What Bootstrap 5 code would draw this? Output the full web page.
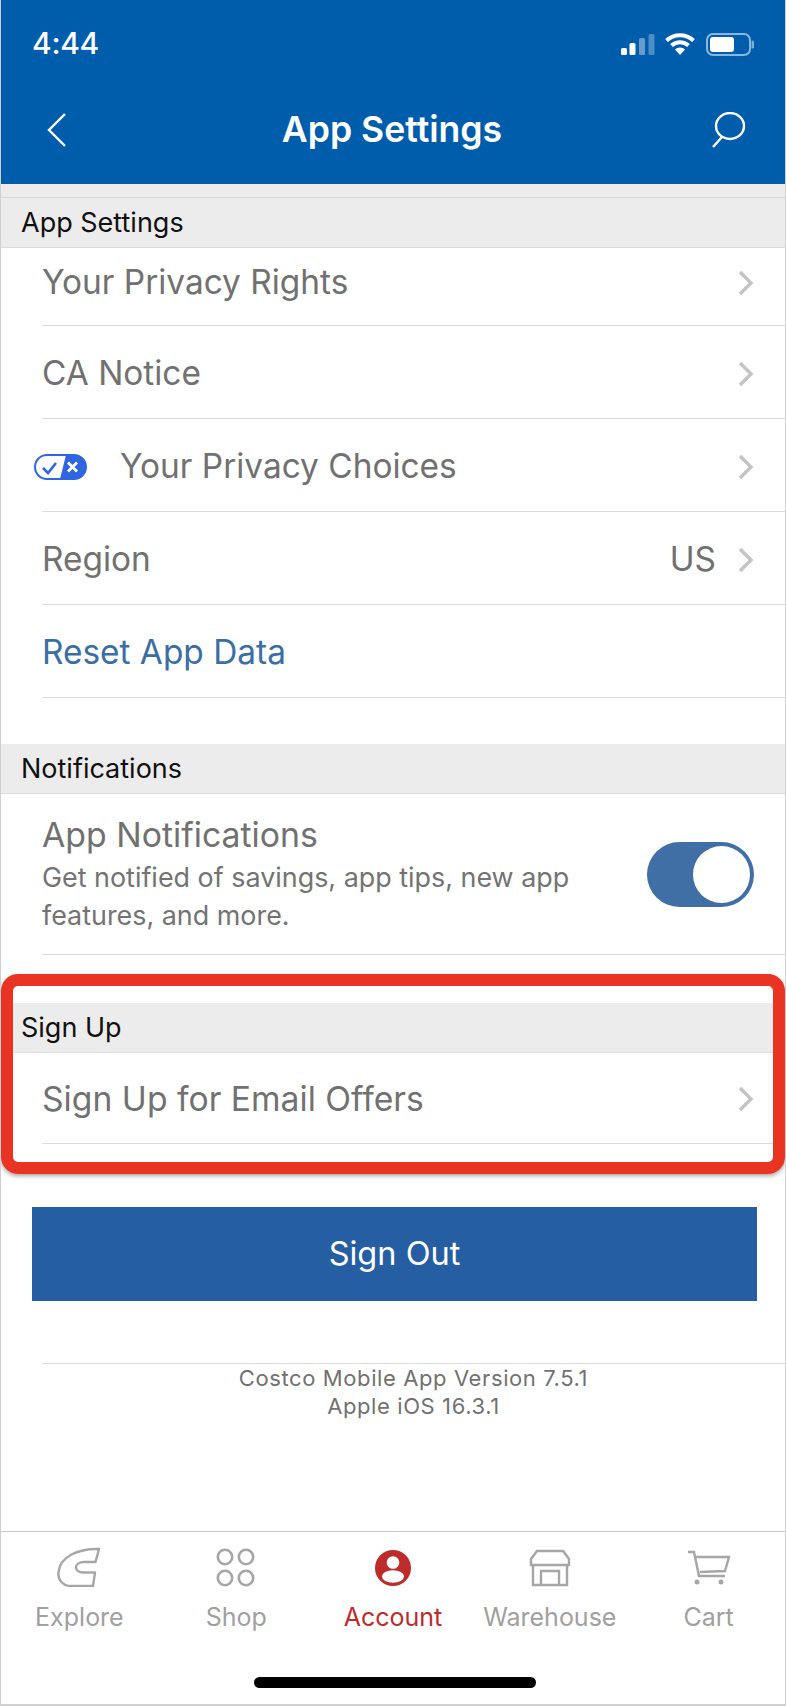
<!DOCTYPE html>
<html lang="en">
<head>
<meta charset="UTF-8" />
<meta name="viewport" content="width=device-width, initial-scale=1.0" />
<link href="https://cdn.jsdelivr.net/npm/bootstrap@5.3.3/dist/css/bootstrap.min.css" rel="stylesheet" />
<title>App Settings</title>
<style>
  html, body { margin: 0; background: #fff; }
  body { font-family: Inter, "Liberation Sans", sans-serif; }
  .phone { width: 786px; height: 1706px; position: relative; overflow: hidden; border: 1px solid #d0d0d0; border-top: 0; }
  .top-blue { height: 184px; background: #005dab; color: #fff; }
  .status-row { height: 86px; padding: 24px 30px 0 31px; }
  .status-time { font-size: 30px; font-weight: 500; line-height: 38px; letter-spacing: -.3px; }
  .status-icons { margin-top: 6px; }
  .title-row { height: 98px; padding: 0 39px 10px 44px; }
  .title-text { font-size: 35.6px; font-weight: 600; margin-left: 7px; }
  .gray-strip { height: 14px; background: #ececec; border-bottom: 1px solid #d8d8d8; }
  .sect-bar { background: #ececec; color: #111; font-size: 27px; line-height: 50px; height: 50px; padding-left: 20px; border-bottom: 1px solid #dcdcdc; }
  .set-row { margin-left: 41px; border-bottom: 1px solid #dcdcdc; height: 93px; padding: 3px 31px 0 0; color: #717171; font-size: 33.4px; }
  .set-row.first-row { height: 78px; padding: 0 31px 8px 0; }
  .set-row.signup-row { height: 91px; padding-top: 2px; font-size: 33.7px; }
  .us-text { margin-right: 22px; }
  .reset-link { color: #3a6ea5; }
  .row-gap { height: 46px; }
  .row-gap-b { height: 48px; }
  .btn-gap { height: 63px; }
  .note-row { margin-left: 41px; height: 161px; border-bottom: 1px solid #dcdcdc; padding-right: 31px; color: #717171; }
  .note-title { font-size: 33.8px; line-height: 42px; margin-bottom: 2px; }
  .note-sub { font-size: 26.9px; line-height: 38px; color: #737373; }
  .switch-pill { width: 107px; height: 65px; border-radius: 33px; background: #3f6fa5; padding: 4px; flex: none; }
  .switch-knob { width: 57px; height: 57px; border-radius: 50%; background: #fff; }
  .privacy-icon { margin-left: -8px; margin-right: 33px; }
  .signout-btn { display: block; margin: 0 29px 0 31px; width: 725px; height: 94px; border-radius: 0; border: 0; background: #265ea3; color: #fff; font-size: 32.5px; }
  .version-block { margin: 62px 0 0 41px; border-top: 1px solid #dcdcdc; color: #717171; font-size: 22px; letter-spacing: .6px; line-height: 28px; text-align: center; }
  .tab-bar { position: absolute; left: 0; right: 0; bottom: 0; height: 174px; border-top: 1px solid #c9c9c9; border-bottom: 1px solid #d0d0d0; background: #fff; padding-top: 15px; }
  .tab-item { width: 157.2px; color: #a0a0a0; font-size: 25px; line-height: 34px; }
  .tab-item.tab-last { padding-left: 4px; }
  .tab-icon { display: block; height: 40px; margin-bottom: 13px; }
  .tab-active { color: #bd2b2b; }
  .home-bar { position: absolute; left: 253px; bottom: 16px; width: 282px; height: 11px; border-radius: 6px; background: #000; }
  .red-frame { position: absolute; left: 0; top: 974px; width: 784px; height: 200px; border: 12px solid #e93323; border-radius: 17px; box-shadow: 0 2px 4px rgba(0,0,0,.35); }
</style>
</head>
<body>
<div class="phone">
  <div class="top-blue">
    <div class="status-row d-flex justify-content-between align-items-start">
      <span class="status-time">4:44</span>
      <svg class="status-icons" width="138" height="30" viewBox="0 0 138 30">
        <g fill="#fff"><rect x="4" y="18" width="6" height="7" rx="1.5"/><rect x="12.500" y="13" width="6" height="12" rx="1.5"/></g>
        <rect x="22" y="8" width="6" height="17" rx="1.5" fill="#fff" opacity=".4"/>
        <rect x="31.500" y="4" width="6" height="21" rx="1.5" fill="#fff" opacity=".3"/>
        <path d="M49.500 10.500a20 20 0 0 1 27 0M54.500 15.500a12.500 12.500 0 0 1 17 0" fill="none" stroke="#fff" stroke-width="4"/>
        <path d="M58 19.500a7 7 0 0 1 10 0L63 25Z" fill="#fff"/>
        <rect x="90" y="4" width="43" height="21" rx="6" fill="none" stroke="#fff" stroke-opacity=".55" stroke-width="2"/>
        <rect x="93" y="7" width="24" height="15" rx="3" fill="#fff"/>
        <rect x="134.500" y="10.500" width="2.500" height="8" rx="1.2" fill="#fff" opacity=".5"/>
      </svg>
    </div>
    <div class="title-row d-flex justify-content-between align-items-center">
      <svg width="22" height="36" viewBox="0 0 22 36"><path d="M20 2 4 18l16 16" fill="none" stroke="#fff" stroke-width="2.4"/></svg>
      <span class="title-text">App Settings</span>
      <svg width="36" height="36" viewBox="0 0 36 36"><ellipse cx="20" cy="14" rx="14" ry="13" fill="none" stroke="#fff" stroke-width="2.4"/><path d="M12 25 3 35" stroke="#fff" stroke-width="2.4"/></svg>
    </div>
  </div>
  <div class="gray-strip"></div>
  <div class="sect-bar">App Settings</div>
  <div class="set-row first-row d-flex align-items-center justify-content-between"><span>Your Privacy Rights</span><svg width="16" height="26" viewBox="0 0 16 26"><path d="M2 2l11 11L2 24" fill="none" stroke="#c4c4c4" stroke-width="3.4"/></svg></div>
  <div class="set-row d-flex align-items-center justify-content-between"><span>CA Notice</span><svg width="16" height="26" viewBox="0 0 16 26"><path d="M2 2l11 11L2 24" fill="none" stroke="#c4c4c4" stroke-width="3.4"/></svg></div>
  <div class="set-row d-flex align-items-center">
    <svg class="privacy-icon" width="53" height="26" viewBox="0 0 53 26"><rect x="1" y="1" width="51" height="24" rx="12" fill="#fff" stroke="#2f66e0" stroke-width="2"/><path d="M32 1h8a12 12 0 0 1 0 24H26Z" fill="#2f66e0"/><path d="M9 14l5 5 8-10" fill="none" stroke="#2f66e0" stroke-width="2.6"/><path d="M34 8.500l9 9m0-9l-9 9" stroke="#fff" stroke-width="2.800"/></svg>
    <span class="flex-grow-1">Your Privacy Choices</span><svg width="16" height="26" viewBox="0 0 16 26"><path d="M2 2l11 11L2 24" fill="none" stroke="#c4c4c4" stroke-width="3.4"/></svg></div>
  <div class="set-row d-flex align-items-center"><span class="flex-grow-1">Region</span><span class="us-text">US</span><svg width="16" height="26" viewBox="0 0 16 26"><path d="M2 2l11 11L2 24" fill="none" stroke="#c4c4c4" stroke-width="3.4"/></svg></div>
  <div class="set-row d-flex align-items-center reset-link">Reset App Data</div>
  <div class="row-gap"></div>
  <div class="sect-bar">Notifications</div>
  <div class="note-row d-flex align-items-center justify-content-between">
    <div><div class="note-title">App Notifications</div><div class="note-sub">Get notified of savings, app tips, new app<br>features, and more.</div></div>
    <div class="switch-pill d-flex justify-content-end"><div class="switch-knob"></div></div>
  </div>
  <div class="row-gap-b"></div>
  <div class="sect-bar">Sign Up</div>
  <div class="set-row signup-row d-flex align-items-center justify-content-between"><span>Sign Up for Email Offers</span><svg width="16" height="26" viewBox="0 0 16 26"><path d="M2 2l11 11L2 24" fill="none" stroke="#c4c4c4" stroke-width="3.4"/></svg></div>
  <div class="btn-gap"></div>
  <button class="btn signout-btn" type="button">Sign Out</button>
  <div class="version-block">Costco Mobile App Version 7.5.1<br>Apple iOS 16.3.1</div>
  <div class="red-frame"></div>
  <div class="tab-bar d-flex justify-content-center">
    <div class="tab-item d-flex flex-column align-items-center">
      <svg class="tab-icon" width="44" height="40" viewBox="0 0 44 40"><path d="M42 2 38.500 15H27C22 15 19 17.500 19 20.500S22 25.500 26 25.500H38L36 39H14C6 39 .5 33 1.500 25 3 10 20 1.500 42 2Z" fill="none" stroke="#a6a6a6" stroke-width="2.400" stroke-linejoin="round"/></svg>
      <span>Explore</span></div>
    <div class="tab-item d-flex flex-column align-items-center">
      <svg class="tab-icon" width="40" height="40" viewBox="0 0 40 40"><g fill="none" stroke="#a6a6a6" stroke-width="2.600"><circle cx="9" cy="10" r="7.200"/><circle cx="30" cy="10" r="7.200"/><circle cx="9" cy="31" r="7.200"/><circle cx="30" cy="31" r="7.200"/></g></svg>
      <span>Shop</span></div>
    <div class="tab-item tab-active d-flex flex-column align-items-center">
      <svg class="tab-icon" width="36" height="40" viewBox="0 0 36 40"><circle cx="18" cy="21" r="18" fill="#bd2b2b"/><circle cx="18" cy="15.500" r="6.300" fill="#fff"/><ellipse cx="18" cy="29.500" rx="11" ry="6.200" fill="#fff"/></svg>
      <span>Account</span></div>
    <div class="tab-item d-flex flex-column align-items-center">
      <svg class="tab-icon" width="44" height="40" viewBox="0 0 44 40"><g fill="none" stroke="#a6a6a6" stroke-width="2.400"><path d="M9 4h26l6 8v6H3v-6Z"/><path d="M5 18v20h34V18"/><path d="M13 38V24h18v14"/></g></svg>
      <span>Warehouse</span></div>
    <div class="tab-item tab-last d-flex flex-column align-items-center">
      <svg class="tab-icon" width="44" height="40" viewBox="0 0 44 40"><g fill="none" stroke="#a6a6a6" stroke-width="2.400"><path d="M1 5h6l5 24h26M9 10h33l-4 14-25 1"/></g><circle cx="10" cy="35" r="2.500" fill="#a6a6a6"/><circle cx="34" cy="35" r="2.500" fill="#a6a6a6"/></svg>
      <span>Cart</span></div>
    <div class="home-bar"></div>
  </div>
</div>
<script src="https://cdn.jsdelivr.net/npm/bootstrap@5.3.3/dist/js/bootstrap.bundle.min.js"></script>
</body>
</html>
